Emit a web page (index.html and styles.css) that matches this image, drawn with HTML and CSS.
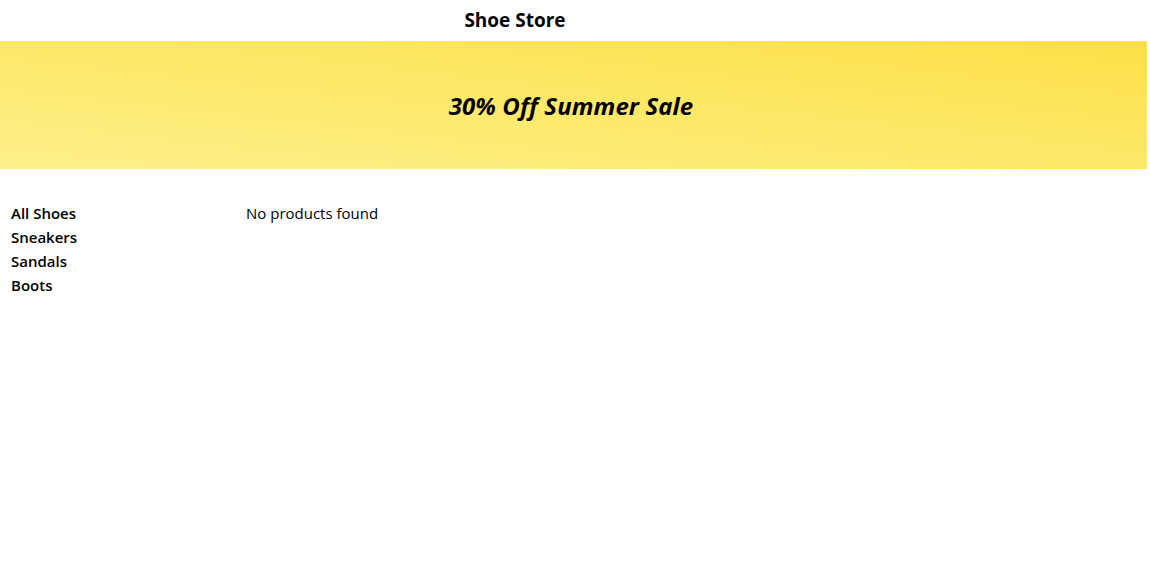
FILE: index.html
```html
<!DOCTYPE html>
<html>
<head>
<meta charset="utf-8">
<link rel="stylesheet" href="styles.css">
</head>
<body>
<header class="header"><h1 class="title">Shoe Store</h1></header>
<section class="banner"><h2 class="banner-text">30% Off Summer Sale</h2></section>
<main class="main">
  <nav class="sidebar">
    <a class="cat">All Shoes</a>
    <a class="cat">Sneakers</a>
    <a class="cat">Sandals</a>
    <a class="cat">Boots</a>
  </nav>
  <div class="products">No products found</div>
</main>
</body>
</html>
```
FILE: styles.css
```css
* { box-sizing: border-box; }
body {
  margin: 0;
  font-family: "Open Sans", "Noto Sans", sans-serif;
  color: #000;
  background: #fff;
}
.header {
  height: 41px;
  display: flex;
  align-items: center;
  justify-content: center;
  padding-right: 120px;
  padding-bottom: 2px;
}
.title {
  margin: 0;
  font-size: 19px;
  font-weight: 700;
  letter-spacing: 0;
}
.banner {
  height: 128px;
  margin-right: 3px;
  display: flex;
  align-items: center;
  justify-content: center;
  padding-right: 5px;
  background: linear-gradient(to top right, #fef08a, #fde047);
}
.banner-text {
  margin: 0;
  font-size: 24px;
  font-style: italic;
  font-weight: 700;
  letter-spacing: 0.1px;
}
.main {
  display: flex;
  padding: 32px 11px;
}
.sidebar {
  width: 235px;
  display: flex;
  flex-direction: column;
}
.cat {
  font-size: 15px;
  font-weight: 600;
  line-height: 24px;
}
.products {
  font-size: 15px;
  line-height: 24px;
}
```
